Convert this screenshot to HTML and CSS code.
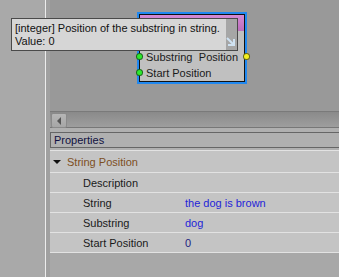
FILE: index.html
```html
<!DOCTYPE html>
<html lang="en">
<head>
    <meta charset="UTF-8">
    <title>String Position</title>
    <link rel="stylesheet" href="styles.css">
</head>
<body>
<div class="app">

    <!-- Left panel -->
    <div class="sidebar"></div>
    <div class="gutter"></div>

    <div class="main">
        <!-- Graph canvas -->
        <div class="canvas">
            <div class="node">
                <div class="node-inner">
                    <div class="node-title"></div>
                    <div class="node-body">
                        <div class="port-row">
                            <span class="pin pin-in"></span>
                            <span>String</span>
                        </div>
                        <div class="port-row">
                            <span class="pin pin-in"></span>
                            <span>Substring</span>
                            <span class="port-out">Position</span>
                            <span class="pin pin-out"></span>
                        </div>
                        <div class="port-row">
                            <span class="pin pin-in"></span>
                            <span>Start Position</span>
                        </div>
                    </div>
                </div>
            </div>
        </div>

        <!-- Horizontal scrollbar -->
        <div class="hscroll">
            <div class="scroll-btn"><span class="arrow-left"></span></div>
        </div>

        <div class="spacer"></div>

        <!-- Properties -->
        <div class="props-header">Properties</div>
        <div class="props-gap"></div>
        <div class="props">
            <div class="group-row">
                <span class="caret"></span>
                <span class="group-name">String Position</span>
            </div>
            <div class="prop-row">
                <span class="prop-label">Description</span>
                <span class="prop-value"></span>
            </div>
            <div class="prop-row">
                <span class="prop-label">String</span>
                <span class="prop-value">the dog is brown</span>
            </div>
            <div class="prop-row">
                <span class="prop-label">Substring</span>
                <span class="prop-value">dog</span>
            </div>
            <div class="prop-row">
                <span class="prop-label">Start Position</span>
                <span class="prop-value num">0</span>
            </div>
        </div>
    </div>

    <!-- Tooltip over the node -->
    <div class="tooltip">
        <div class="tooltip-text">
            [integer] Position of the substring in string.<br>
            Value: 0
        </div>
        <div class="tooltip-side">
            <svg width="10" height="10" viewBox="0 0 10 10">
                <path d="M1 1 L7 7 M8 2 L8 8 L2 8" stroke="#cfe2f2" stroke-width="2" fill="none"/>
            </svg>
        </div>
    </div>

</div>
</body>
</html>
```

FILE: styles.css
```css
/* General Styles */
body {
    margin: 0;
    padding: 0;
    font-family: "Liberation Sans", Arial, sans-serif;
    font-size: 11px;
    color: #1a1a1a;
}

.app {
    position: relative;
    display: flex;
    width: 339px;
    height: 277px;
    overflow: hidden;
    background-color: #a8a8a8;
}

.sidebar {
    width: 45px;
    background-color: #a9a9a9;
    border-right: 1px solid #ececec;
}

.gutter {
    width: 4px;
    background-color: #a0a0a0;
}

.main {
    flex: 1;
    display: flex;
    flex-direction: column;
}

/* Canvas */
.canvas {
    position: relative;
    height: 111px;
    background-color: #999999;
}

.node {
    position: absolute;
    left: 87px;
    top: 12px;
    width: 106px;
    border: 2px solid #2088f0;
}

.node-inner {
    border: 1px solid #111;
    background-color: #c0c0c0;
}

.node-title {
    height: 16px;
    background: linear-gradient(#d48ad4, #bc6cbc);
}

.node-body {
    padding: 2px 0 0 0;
}

.port-row {
    position: relative;
    display: flex;
    align-items: center;
    height: 16px;
    padding: 0 6px 0 6px;
}

.port-out {
    margin-left: auto;
}

.pin {
    position: absolute;
    width: 5px;
    height: 5px;
    border-radius: 50%;
    top: 5px;
}

.pin-in {
    left: -3px;
    background-color: #2ee82e;
    box-shadow: 0 0 0 1px #1a6a1a;
}

.pin-out {
    right: -5px;
    background-color: #f4f020;
    box-shadow: 0 0 0 1px #6a6a10;
}

/* Scrollbar */
.hscroll {
    height: 15px;
    border-top: 1px solid #7a7a7a;
    border-bottom: 1px solid #777;
    background: linear-gradient(#8a8a8a, #9e9e9e);
    display: flex;
    padding: 0 0 0 1px;
}

.scroll-btn {
    width: 14px;
    height: 13px;
    margin-top: 1px;
    background: linear-gradient(#b6b6b6, #a6a6a6);
    border: 1px solid #8a8a8a;
    border-radius: 2px;
    display: flex;
    align-items: center;
    justify-content: center;
}

.arrow-left {
    width: 0;
    height: 0;
    border-top: 4px solid transparent;
    border-bottom: 4px solid transparent;
    border-right: 4px solid #555;
}

.spacer {
    height: 4px;
    background-color: #b0b0b0;
}

/* Properties */
.props-header {
    height: 14px;
    line-height: 14px;
    padding-left: 3px;
    background-color: #b0b0b0;
    border-top: 1px solid #666;
    border-bottom: 1px solid #666;
    border-left: 1px solid #666;
    color: #101040;
}

.props-gap {
    height: 2px;
    background-color: #b0b0b0;
    border-bottom: 1px solid #e2e2e2;
}

.props {
    background-color: #c4c4c4;
}

.group-row {
    display: flex;
    align-items: center;
    height: 21px;
    border-bottom: 1px solid #e2e2e2;
}

.caret {
    width: 0;
    height: 0;
    margin: 0 6px 0 3px;
    border-left: 4px solid transparent;
    border-right: 4px solid transparent;
    border-top: 4px solid #111;
}

.group-name {
    color: #7d4f1e;
}

.prop-row {
    display: flex;
    align-items: center;
    height: 19px;
    border-bottom: 1px solid #e2e2e2;
}

.prop-label {
    width: 102px;
    padding-left: 33px;
}

.prop-value {
    color: #1f1fd8;
}

.prop-value.num {
    color: #1c1c80;
}

/* Tooltip */
.tooltip {
    position: absolute;
    left: 11px;
    top: 18px;
    width: 225px;
    height: 31px;
    display: flex;
    border: 1px solid #4a4a4a;
    background-color: #d6d6d6;
}

.tooltip-text {
    flex: 1;
    padding: 3px 0 0 3px;
    line-height: 13px;
    color: #111;
}

.tooltip-side {
    width: 11px;
    background-color: #a6a6a6;
    display: flex;
    align-items: flex-end;
    padding-bottom: 3px;
}
```
